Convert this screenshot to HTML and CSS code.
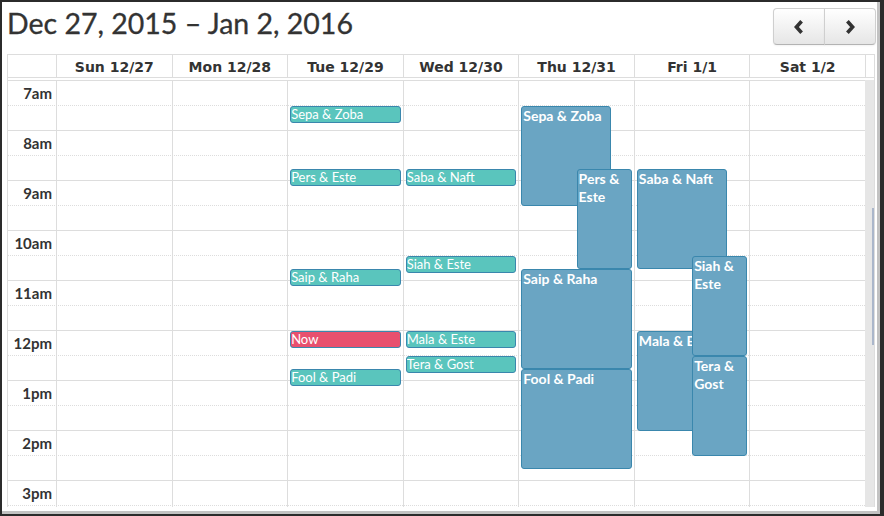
FILE: index.html
```html
<!DOCTYPE html>
<html lang="en">
<head>
<meta charset="utf-8">
<title>Week calendar</title>
<link rel="stylesheet" href="styles.css">
</head>
<body>
<div class="window">
  <div class="toolbar">
    <h2 class="title">Dec 27, 2015 – Jan 2, 2016</h2>
    <div class="btn-group">
      <button class="btn btn-prev" aria-label="prev"><svg width="10" height="14" viewBox="0 0 10 14"><path d="M7.6 1.2 L2.4 7 L7.6 12.8" fill="none" stroke="#333" stroke-width="3.6"/></svg></button>
      <button class="btn btn-next" aria-label="next"><svg width="10" height="14" viewBox="0 0 10 14"><path d="M2.4 1.2 L7.6 7 L2.4 12.8" fill="none" stroke="#333" stroke-width="3.6"/></svg></button>
    </div>
  </div>
  <div class="cal">
    <div class="head">
      <div class="hcell axis"></div>
      <div class="hcell">Sun 12/27</div>
      <div class="hcell">Mon 12/28</div>
      <div class="hcell">Tue 12/29</div>
      <div class="hcell">Wed 12/30</div>
      <div class="hcell">Thu 12/31</div>
      <div class="hcell">Fri 1/1</div>
      <div class="hcell">Sat 1/2</div>
      <div class="hcell gutter"></div>
    </div>
    <div class="divider"></div>
    <div class="body">
      <div class="main">
        <div class="slats">
          <div class="slat hour"><span class="label">7am</span></div>
          <div class="slat half"></div>
          <div class="slat hour"><span class="label">8am</span></div>
          <div class="slat half"></div>
          <div class="slat hour"><span class="label">9am</span></div>
          <div class="slat half"></div>
          <div class="slat hour"><span class="label">10am</span></div>
          <div class="slat half"></div>
          <div class="slat hour"><span class="label">11am</span></div>
          <div class="slat half"></div>
          <div class="slat hour"><span class="label">12pm</span></div>
          <div class="slat half"></div>
          <div class="slat hour"><span class="label">1pm</span></div>
          <div class="slat half"></div>
          <div class="slat hour"><span class="label">2pm</span></div>
          <div class="slat half"></div>
          <div class="slat hour"><span class="label">3pm</span></div>
          <div class="slat half"></div>
        </div>
        <div class="cols">
          <div class="axis-col"></div>
          <div class="day"></div>
          <div class="day"></div>
          <div class="day">
            <div class="ev small" style="top:26px">Sepa &amp; Zoba</div>
            <div class="ev small" style="top:89px">Pers &amp; Este</div>
            <div class="ev small" style="top:189px">Saip &amp; Raha</div>
            <div class="ev small now" style="top:251px">Now</div>
            <div class="ev small" style="top:289px">Fool &amp; Padi</div>
          </div>
          <div class="day">
            <div class="ev small" style="top:89px">Saba &amp; Naft</div>
            <div class="ev small" style="top:176px">Siah &amp; Este</div>
            <div class="ev small" style="top:251px">Mala &amp; Este</div>
            <div class="ev small" style="top:276px">Tera &amp; Gost</div>
          </div>
          <div class="day">
            <div class="ev big first" style="top:26px;height:100px">Sepa &amp; Zoba</div>
            <div class="ev big second" style="top:89px;height:100px">Pers &amp; Este</div>
            <div class="ev big" style="top:189px;height:100px">Saip &amp; Raha</div>
            <div class="ev big" style="top:289px;height:100px">Fool &amp; Padi</div>
          </div>
          <div class="day">
            <div class="ev big first" style="top:89px;height:100px">Saba &amp; Naft</div>
            <div class="ev big first" style="top:251px;height:100px">Mala &amp; Este</div>
            <div class="ev big second" style="top:176px;height:100px">Siah &amp; Este</div>
            <div class="ev big second" style="top:276px;height:100px">Tera &amp; Gost</div>
          </div>
          <div class="day"></div>
        </div>
      </div>
      <div class="scroll"><div class="thumb"></div></div>
    </div>
  </div>
</div>
</body>
</html>
```

FILE: styles.css
```css
* { box-sizing: border-box; }

html, body { margin: 0; }

body {
  background: #2b2b2b;
  padding: 2px 0 0 2px;
  font-family: Lato, "Liberation Sans", sans-serif;
  color: #333;
}

.window {
  width: 878px;
  height: 512px;
  background: #fff;
  border-right: 3px solid #c2c2c2;
  border-bottom: 3px solid #c2c2c2;
  overflow: hidden;
}

.toolbar {
  display: flex;
  justify-content: space-between;
  align-items: flex-start;
  height: 52px;
  padding: 0 1px 0 5px;
}

.title {
  margin: 4px 0 0;
  font-size: 28.5px;
  font-weight: 400;
  line-height: 34px;
  color: #333;
  -webkit-text-stroke: 0.3px #333;
}

.btn-group {
  display: flex;
  margin-top: 6px;
}

.btn {
  width: 52px;
  height: 37px;
  padding: 0;
  display: flex;
  align-items: center;
  justify-content: center;
  border: 1px solid #cfcfcf;
  border-bottom-color: #b3b3b3;
  background: linear-gradient(#ffffff, #e6e6e6);
  box-shadow: inset 0 1px 0 rgba(255,255,255,.2), 0 1px 2px rgba(0,0,0,.05);
}

.btn-prev { border-radius: 4px 0 0 4px; }
.btn-next { border-radius: 0 4px 4px 0; margin-left: -1px; }

.cal {
  margin-left: 5px;
  width: 868px;
  border-top: 1px solid #ddd;
  border-left: 1px solid #ddd;
  border-right: 1px solid #ddd;
}

.head {
  display: grid;
  grid-template-columns: 48px repeat(7, 1fr) 9px;
}

.hcell {
  height: 23px;
  padding-top: 1px;
  border-left: 1px solid #ddd;
  border-bottom: 1px solid #ddd;
  text-align: center;
  font-family: "DejaVu Sans", sans-serif;
  font-weight: bold;
  font-size: 14px;
  line-height: 22px;
  color: #333;
  white-space: nowrap;
}

.hcell.axis { border-left: none; }

.divider { height: 2px; }

.body {
  display: flex;
  height: 427px;
  overflow: hidden;
}

.main {
  display: grid;
  width: 857px;
  align-items: start;
}

.slats, .cols { grid-area: 1 / 1; }

.slat {
  height: 25px;
  border-top: 1px solid #ddd;
}

.slat.half { border-top-style: dotted; }

.label {
  display: block;
  width: 48px;
  padding-right: 4px;
  text-align: right;
  font-weight: bold;
  font-size: 15px;
  line-height: 24px;
  color: #333;
}

.cols {
  display: grid;
  grid-template-columns: 48px repeat(7, 1fr);
  height: 450px;
}

.day {
  position: relative;
  border-left: 1px solid #ddd;
}

.ev {
  position: absolute;
  left: 2px;
  right: 2px;
  border: 1px solid #3a87ad;
  border-radius: 3px;
  color: #fff;
  overflow: hidden;
}

.ev.small {
  height: 17px;
  background: #5ac5bd;
  font-size: 13px;
  line-height: 15px;
  white-space: nowrap;
}

.ev.now { background: #e8506e; }

.ev.big {
  left: 2px;
  background: #6aa5c3;
  font-weight: bold;
  font-size: 14px;
  line-height: 18px;
  padding: 0 1px;
}

.ev.first { right: 20%; }
.ev.second { left: 50%; }

.scroll {
  width: 9px;
  background: #e6e6e6;
}

.thumb {
  margin: 128px 0 0 auto;
  width: 2px;
  height: 137px;
  background: #aab6ca;
}
```
